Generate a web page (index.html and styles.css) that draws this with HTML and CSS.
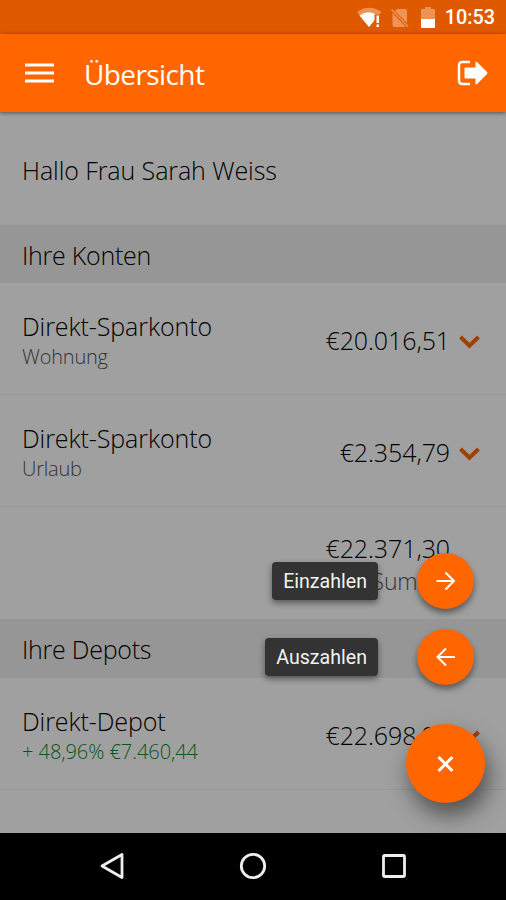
FILE: index.html
```html
<!DOCTYPE html>
<html lang="de">
<head>
    <meta charset="UTF-8">
    <title>Übersicht</title>
    <link rel="stylesheet" href="styles.css">
</head>
<body>
    <div class="statusbar">
        <svg class="wifi" width="26" height="22" viewBox="0 0 26 22">
            <path d="M0 5Q12-3.5 24.500 5L12 20Z" fill="#ec9355"/>
            <path d="M2.500 8.500Q12 2 20 8.500V10L12 20Z" fill="#fff"/>
            <path d="M17.500 7.500H25V21H17.500Z" fill="#df5900"/>
            <path d="M19.500 8.500H22V16H19.500ZM19.500 17.500H22V20H19.500Z" fill="#fff"/>
        </svg>
        <svg class="sim" width="18" height="20" viewBox="0 0 18 20">
            <path d="M6 1H14Q16 1 16 3V15L4 3ZM1.500 5L15 19H3.500Q1.500 19 1.500 17Z" fill="#ec9355"/>
            <path d="M.5 1.500L17 18.500" stroke="#ec9355" stroke-width="1.500"/>
        </svg>
        <svg class="battery" width="14" height="21" viewBox="0 0 14 21">
            <path d="M0 3Q0 2 1 2H4V0H10V2H13Q14 2 14 3V12H0Z" fill="#ec9355"/>
            <path d="M0 12H14V20Q14 21 13 21H1Q0 21 0 20Z" fill="#fff"/>
        </svg>
        <span class="clock">10:53</span>
    </div>

    <header class="appbar">
        <svg class="menu" width="29" height="20" viewBox="0 0 29 20">
            <path d="M0 2H29M0 10H29M0 18H29" stroke="#fff" stroke-width="3"/>
        </svg>
        <h1>Übersicht</h1>
        <svg class="logout" width="31" height="26" viewBox="0 0 31 26">
            <path d="M13 2H5.500Q2 2 2 5.500V20.500Q2 24 5.500 24H13" fill="none" stroke="#fff" stroke-width="2.500"/>
            <path d="M8.500 7.500H18.500V2Q19 1 20 2L30 12Q31 13 30 14L20 24Q19 25 18.500 24V18.500H8.500Q7.500 18.500 7.500 17.500V8.500Q7.500 7.500 8.500 7.500Z" fill="#fff"/>
        </svg>
    </header>

    <main class="content">
        <p class="greeting">Hallo Frau Sarah Weiss</p>

        <h2>Ihre Konten</h2>
        <div class="row">
            <div class="account">
                <span class="name">Direkt-Sparkonto</span>
                <span class="sub">Wohnung</span>
            </div>
            <span class="amount">€20.016,51</span>
            <svg class="chevron" width="21" height="15" viewBox="0 0 21 15"><path d="M1.500 3L10.500 11.800L19.500 3"/></svg>
        </div>
        <div class="row">
            <div class="account">
                <span class="name">Direkt-Sparkonto</span>
                <span class="sub">Urlaub</span>
            </div>
            <span class="amount">€2.354,79</span>
            <svg class="chevron" width="21" height="15" viewBox="0 0 21 15"><path d="M1.500 3L10.500 11.800L19.500 3"/></svg>
        </div>
        <div class="row total">
            <div class="sum">
                <span class="amount">€22.371,30</span>
                <span class="sub">Summe</span>
            </div>
        </div>

        <h2 class="depots">Ihre Depots</h2>
        <div class="row">
            <div class="account">
                <span class="name">Direkt-Depot</span>
                <span class="sub gain">+ 48,96% €7.460,44</span>
            </div>
            <span class="amount">€22.698,90</span>
            <svg class="chevron" width="21" height="15" viewBox="0 0 21 15"><path d="M1.500 3L10.500 11.800L19.500 3"/></svg>
        </div>
        <div class="overlay"></div>
    </main>

    <!-- Speed dial -->
    <div class="dial">
        <div class="action">
            <span class="label">Einzahlen</span>
            <button class="fab">
                <svg width="20" height="20" viewBox="0 0 20 20"><path d="M.5 10H18M9.500 1.500L18 10L9.500 18.500"/></svg>
            </button>
        </div>
        <div class="action">
            <span class="label">Auszahlen</span>
            <button class="fab">
                <svg width="20" height="20" viewBox="0 0 20 20"><path d="M19 10H1.500M10 1.500L1.500 10L10 18.500"/></svg>
            </button>
        </div>
        <button class="fab main">
            <svg width="18" height="18" viewBox="0 0 18 18"><path d="M1.500 2L15.500 16M15.500 2L1.500 16"/></svg>
        </button>
    </div>

    <nav class="navbar">
        <svg width="26" height="28" viewBox="0 0 26 28"><path d="M23 2.500V25.500L3 14Z"/></svg>
        <svg width="28" height="28" viewBox="0 0 28 28"><circle cx="14" cy="14" r="11.700"/></svg>
        <svg width="26" height="26" viewBox="0 0 26 26"><rect x="2.500" y="2.500" width="21" height="21" rx="1"/></svg>
    </nav>
</body>
</html>
```
FILE: styles.css
```css
* {
    box-sizing: border-box;
}

body {
    margin: 0;
    height: 900px;
    display: flex;
    flex-direction: column;
    position: relative;
    overflow: hidden;
    font-family: "Open Sans", "Noto Sans", sans-serif;
    font-weight: 340;
    background-color: #fff;
    color: #000;
}

/* Status bar */
.statusbar {
    height: 34px;
    flex: none;
    display: flex;
    align-items: center;
    justify-content: flex-end;
    padding: 1px 11px 0 0;
    background-color: #df5900;
}

.wifi {
    margin-right: 8px;
}

.sim {
    margin-right: 12px;
}

.battery {
    margin-right: 10px;
}

.clock {
    font-family: Roboto, sans-serif;
    font-size: 19.8px;
    font-weight: 500;
    color: #fff;
}

/* App bar */
.appbar {
    height: 78px;
    flex: none;
    display: flex;
    align-items: center;
    padding: 0 18px 0 25px;
    background-color: #ff6600;
    color: #fff;
    position: relative;
    z-index: 2;
    box-shadow: 0 1px 4px rgba(0, 0, 0, 0.5);
}

h1 {
    flex: 1;
    margin: 0 0 0 30px;
    padding-top: 2px;
    font-size: 28px;
    font-weight: 370;
    letter-spacing: -0.6px;
}

/* Account list */
.content {
    height: 721px;
    flex: none;
    position: relative;
}

.overlay {
    position: absolute;
    inset: 0;
    background-color: rgba(0, 0, 0, 0.373);
}

.greeting {
    height: 113px;
    margin: 0;
    padding: 2px 0 0 22px;
    display: flex;
    align-items: center;
    font-size: 25px;
    letter-spacing: -0.08px;
}

h2 {
    height: 58px;
    margin: 0;
    padding: 1px 0 0 22px;
    display: flex;
    align-items: center;
    background-color: #f0f0f0;
    font-size: 25px;
    font-weight: 340;
    letter-spacing: -0.25px;
}

.depots {
    height: 59px;
}

.row {
    height: 112px;
    display: flex;
    align-items: center;
    padding: 4px 26px 0 22px;
    border-bottom: 1px solid #f2f2f2;
}

.account {
    flex: 1;
    display: flex;
    flex-direction: column;
}

.name {
    font-size: 25px;
    line-height: 32px;
    letter-spacing: -0.08px;
}

.sub {
    font-size: 20px;
    line-height: 30px;
    letter-spacing: -0.2px;
    color: #555;
}

.gain {
    color: #088a30;
    letter-spacing: -0.05px;
}

.amount {
    padding-bottom: 2px;
    font-size: 25px;
    line-height: 32px;
    letter-spacing: -0.1px;
}

.chevron {
    margin: 2px 0 0 9px;
}

.chevron path {
    fill: none;
    stroke: #ff6600;
    stroke-width: 4;
}

.total {
    justify-content: flex-end;
    padding: 2px 56px 0 0;
    border-bottom: none;
}

.sum {
    display: flex;
    flex-direction: column;
    align-items: flex-end;
}

.sum .sub {
    font-size: 23px;
}

/* Speed dial */
.dial {
    position: absolute;
    z-index: 3;
    right: 21px;
    top: 553px;
    display: flex;
    flex-direction: column;
    align-items: flex-end;
}

.action {
    display: flex;
    align-items: center;
    margin: 0 11px 20px 0;
}

.label {
    height: 38px;
    margin-right: 39px;
    padding: 1px 11px 0;
    border-radius: 4px;
    background-color: #333;
    color: #f2f2f2;
    font-family: Roboto, sans-serif;
    font-size: 19.6px;
    font-weight: 400;
    line-height: 38px;
    box-shadow: 0 3px 6px rgba(0, 0, 0, 0.45);
}

.fab {
    width: 57px;
    height: 56px;
    padding: 0;
    display: flex;
    align-items: center;
    justify-content: center;
    border: none;
    border-radius: 50%;
    background-color: #ff6600;
    box-shadow: 0 4px 6px rgba(0, 0, 0, 0.45);
}

.fab path {
    fill: none;
    stroke: #fff;
    stroke-width: 2;
}

.main {
    width: 79px;
    height: 79px;
    margin-top: 19px;
    box-shadow: 4px 12px 22px rgba(0, 0, 0, 0.5);
}

.main path {
    stroke-width: 3;
}

/* Android navigation */
.navbar {
    height: 67px;
    flex: none;
    display: flex;
    align-items: center;
    justify-content: space-between;
    padding: 0 99px 1px 99px;
    background-color: #000;
}

.navbar svg {
    fill: none;
    stroke: #eee;
    stroke-width: 2.8;
    stroke-linejoin: round;
}
```
